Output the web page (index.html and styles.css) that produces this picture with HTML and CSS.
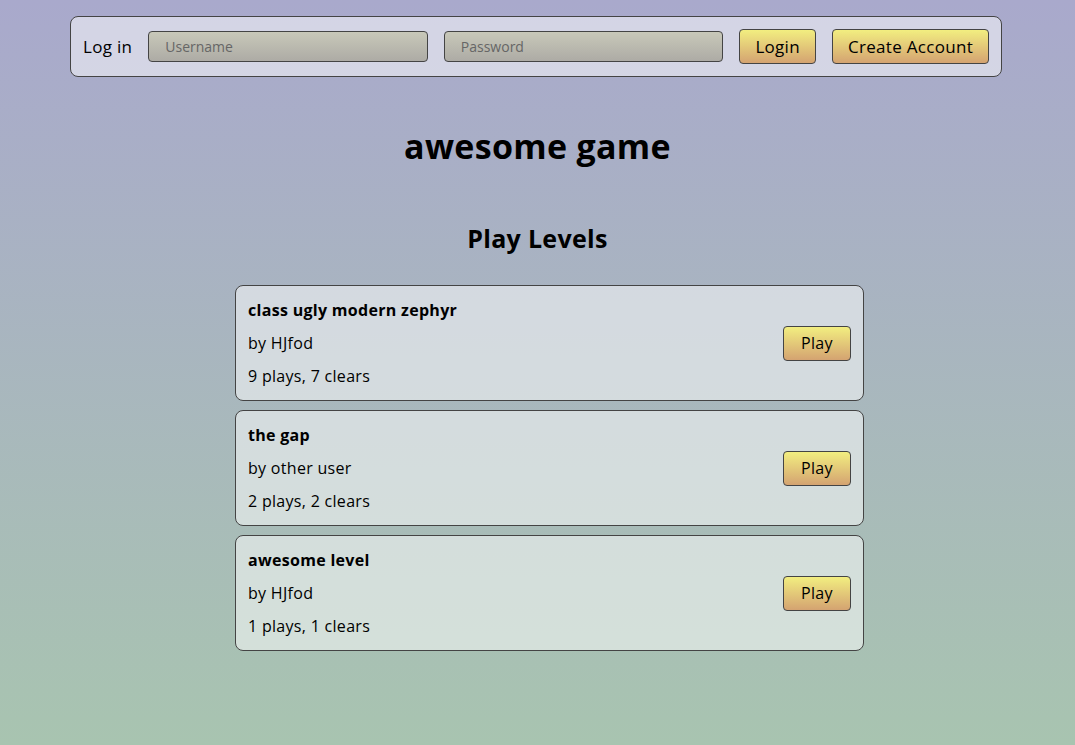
FILE: index.html
```html
<!DOCTYPE html>
<html>
<head>
<meta charset="UTF-8">
<title>awesome game</title>
<link rel="stylesheet" href="styles.css">
</head>
<body>
  <div class="loginBar">
    <span class="loginLabel">Log in</span>
    <input class="field" type="text" placeholder="Username">
    <input class="field" type="password" placeholder="Password">
    <button class="btn">Login</button>
    <button class="btn">Create Account</button>
  </div>

  <h1 class="title">awesome game</h1>
  <h2 class="subtitle">Play Levels</h2>

  <div class="levels">
    <div class="level">
      <div class="info">
        <div class="name">class ugly modern zephyr</div>
        <div>by HJfod</div>
        <div>9 plays, 7 clears</div>
      </div>
      <button class="btn play">Play</button>
    </div>
    <div class="level">
      <div class="info">
        <div class="name">the gap</div>
        <div>by other user</div>
        <div>2 plays, 2 clears</div>
      </div>
      <button class="btn play">Play</button>
    </div>
    <div class="level">
      <div class="info">
        <div class="name">awesome level</div>
        <div>by HJfod</div>
        <div>1 plays, 1 clears</div>
      </div>
      <button class="btn play">Play</button>
    </div>
  </div>
</body>
</html>
```

FILE: styles.css
```css
html{
  min-height: 100%;
  background: linear-gradient(#a9a9cc, #a8c4b0);
}
body{
  margin: 8px;
  font-family: "Open Sans", sans-serif;
  letter-spacing: 0.3px;
  color: #000;
}
.loginBar{
  display: flex;
  align-items: center;
  gap: 16px;
  margin: 8px 65px 0 62px;
  padding: 12px;
  border: 1px solid #444;
  border-radius: 8px;
  background-color: rgba(255, 255, 255, 0.5);
}
.loginLabel{
  font-size: 17px;
}
.field{
  flex: 1;
  height: 31px;
  box-sizing: border-box;
  padding: 0 16px;
  border: 1px solid #444;
  border-radius: 4px;
  background: linear-gradient(#c8c8b9, #adaba5);
  font-family: inherit;
  font-size: 14px;
}
.field::placeholder{
  color: #666;
}
.btn{
  height: 35px;
  padding: 0 15px;
  border: 1px solid #444;
  border-radius: 4px;
  background: linear-gradient(#f2ee80, #d4a371);
  font-family: inherit;
  letter-spacing: inherit;
  font-size: 17px;
  color: #000;
}
.title{
  margin: 46px 0 0;
  text-align: center;
  font-size: 34px;
  font-weight: 700;
}
.subtitle{
  margin: 52px 0 0;
  text-align: center;
  font-size: 25px;
  font-weight: 700;
}
.levels{
  display: flex;
  flex-direction: column;
  gap: 9px;
  width: 629px;
  margin: 30px 0 0 227px;
}
.level{
  display: flex;
  align-items: center;
  justify-content: space-between;
  padding: 12px;
  border: 1px solid #444;
  border-radius: 8px;
  background-color: rgba(255, 255, 255, 0.5);
}
.info{
  display: flex;
  flex-direction: column;
  gap: 9px;
  font-size: 16px;
  line-height: 24px;
}
.name{
  font-weight: 700;
}
.play{
  padding: 0;
  width: 68px;
  font-size: 16px;
}
```
